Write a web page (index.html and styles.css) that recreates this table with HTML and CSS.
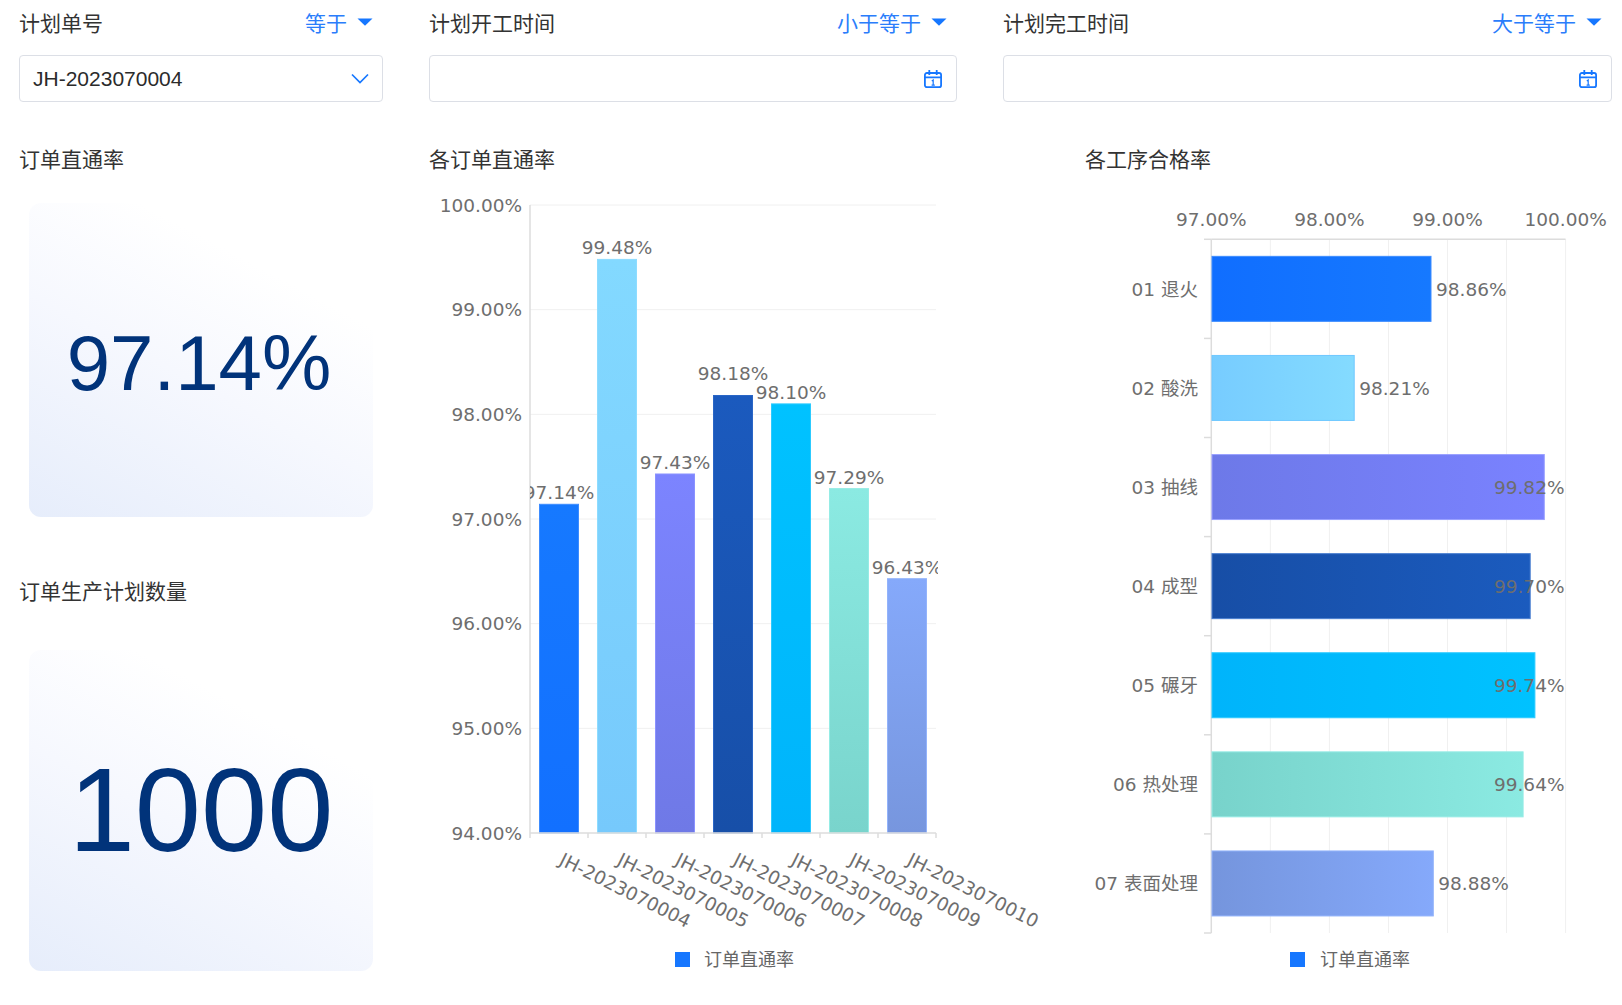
FILE: index.html
```html
<!DOCTYPE html>
<html lang="zh-CN">
<head>
<meta charset="utf-8">
<title>订单直通率</title>
<link rel="stylesheet" href="styles.css">
</head>
<body>
<div class="page">
  <div class="filters">
    <div class="filter">
      <div class="filter-head">
        <span class="filter-label">计划单号</span>
        <span class="filter-op">等于<svg class="caret" width="16" height="8" viewBox="0 0 16 8"><path d="M0.5 0.5h15L8 7.8z" fill="#1677ff"/></svg></span>
      </div>
      <div class="filter-box">
        <span class="filter-value">JH-2023070004</span>
        <svg class="chevron" width="18" height="11" viewBox="0 0 18 11"><path d="M1 1.5l8 8 8-8" fill="none" stroke="#1677ff" stroke-width="1.7"/></svg>
      </div>
    </div>
    <div class="filter">
      <div class="filter-head">
        <span class="filter-label">计划开工时间</span>
        <span class="filter-op">小于等于<svg class="caret" width="16" height="8" viewBox="0 0 16 8"><path d="M0.5 0.5h15L8 7.8z" fill="#1677ff"/></svg></span>
      </div>
      <div class="filter-box">
        <span class="filter-value"></span>
        <svg class="cal" width="20" height="20" viewBox="0 0 20 20" fill="none" stroke="#1677ff"><rect x="1.9" y="4" width="16.2" height="14.2" rx="2" stroke-width="1.8"/><path d="M1.9 8.4h16.2M6.3 1v5M13.7 1v5" stroke-width="1.8"/><path d="M8.8 11.9l1.4-1v5.3M8.6 16.2h3.2" stroke-width="1.2"/></svg>
      </div>
    </div>
    <div class="filter">
      <div class="filter-head">
        <span class="filter-label">计划完工时间</span>
        <span class="filter-op">大于等于<svg class="caret" width="16" height="8" viewBox="0 0 16 8"><path d="M0.5 0.5h15L8 7.8z" fill="#1677ff"/></svg></span>
      </div>
      <div class="filter-box">
        <span class="filter-value"></span>
        <svg class="cal" width="20" height="20" viewBox="0 0 20 20" fill="none" stroke="#1677ff"><rect x="1.9" y="4" width="16.2" height="14.2" rx="2" stroke-width="1.8"/><path d="M1.9 8.4h16.2M6.3 1v5M13.7 1v5" stroke-width="1.8"/><path d="M8.8 11.9l1.4-1v5.3M8.6 16.2h3.2" stroke-width="1.2"/></svg>
      </div>
    </div>
  </div>

  <div class="content">
    <div class="kpis">
      <div class="title">订单直通率</div>
      <div class="card card-rate"><span class="kpi kpi-rate">97.14%</span></div>
      <div class="title title-second">订单生产计划数量</div>
      <div class="card card-qty"><span class="kpi kpi-qty">1000</span></div>
    </div>

    <div class="chart-col">
      <div class="title">各订单直通率</div>
      <svg class="chart" width="610" height="830" viewBox="0 0 610 830">
        <defs>
          <clipPath id="plotclip"><rect x="101" y="0" width="408" height="660"/></clipPath>
          <linearGradient id="v1" x1="0" y1="0" x2="0" y2="1"><stop offset="0" stop-color="#1679ff"/><stop offset="1" stop-color="#1270ff"/></linearGradient>
          <linearGradient id="v2" x1="0" y1="0" x2="0" y2="1"><stop offset="0" stop-color="#83d9ff"/><stop offset="1" stop-color="#76c9fc"/></linearGradient>
          <linearGradient id="v3" x1="0" y1="0" x2="0" y2="1"><stop offset="0" stop-color="#7c84ff"/><stop offset="1" stop-color="#6f79e6"/></linearGradient>
          <linearGradient id="v4" x1="0" y1="0" x2="0" y2="1"><stop offset="0" stop-color="#1b5abe"/><stop offset="1" stop-color="#174fa8"/></linearGradient>
          <linearGradient id="v5" x1="0" y1="0" x2="0" y2="1"><stop offset="0" stop-color="#00c2ff"/><stop offset="1" stop-color="#00b4fb"/></linearGradient>
          <linearGradient id="v6" x1="0" y1="0" x2="0" y2="1"><stop offset="0" stop-color="#8beae2"/><stop offset="1" stop-color="#79d4cc"/></linearGradient>
          <linearGradient id="v7" x1="0" y1="0" x2="0" y2="1"><stop offset="0" stop-color="#85a9fb"/><stop offset="1" stop-color="#7796de"/></linearGradient>
        </defs>
        <g class="grid">
          <line x1="101" y1="30" x2="507" y2="30"/>
          <line x1="101" y1="134.67" x2="507" y2="134.67"/>
          <line x1="101" y1="239.33" x2="507" y2="239.33"/>
          <line x1="101" y1="344" x2="507" y2="344"/>
          <line x1="101" y1="448.67" x2="507" y2="448.67"/>
          <line x1="101" y1="553.33" x2="507" y2="553.33"/>
        </g>
        <g class="axis-text" text-anchor="end">
          <text x="93" y="30" dy="0.36em">100.00%</text>
          <text x="93" y="134.67" dy="0.36em">99.00%</text>
          <text x="93" y="239.33" dy="0.36em">98.00%</text>
          <text x="93" y="344" dy="0.36em">97.00%</text>
          <text x="93" y="448.67" dy="0.36em">96.00%</text>
          <text x="93" y="553.33" dy="0.36em">95.00%</text>
          <text x="93" y="658" dy="0.36em">94.00%</text>
        </g>
        <g class="bars">
          <rect x="110.5" y="329.3" width="39" height="328.7" fill="url(#v1)" stroke="#3d8cff"/>
          <rect x="168.5" y="84.4" width="39" height="573.6" fill="url(#v2)" stroke="#8ddcff"/>
          <rect x="226.5" y="299" width="39" height="359" fill="url(#v3)" stroke="#8a92ff"/>
          <rect x="284.5" y="220.5" width="39" height="437.5" fill="url(#v4)" stroke="#2a66c6"/>
          <rect x="342.5" y="228.9" width="39" height="429.1" fill="url(#v5)" stroke="#2ccaff"/>
          <rect x="400.5" y="313.6" width="39" height="344.4" fill="url(#v6)" stroke="#95ece5"/>
          <rect x="458.5" y="403.7" width="39" height="254.3" fill="url(#v7)" stroke="#93b3fb"/>
        </g>
        <g class="axis-line">
          <line x1="101" y1="30" x2="101" y2="658"/>
          <line x1="101" y1="658" x2="507" y2="658"/>
          <line x1="101" y1="658" x2="101" y2="663"/>
          <line x1="159" y1="658" x2="159" y2="663"/>
          <line x1="217" y1="658" x2="217" y2="663"/>
          <line x1="275" y1="658" x2="275" y2="663"/>
          <line x1="333" y1="658" x2="333" y2="663"/>
          <line x1="391" y1="658" x2="391" y2="663"/>
          <line x1="449" y1="658" x2="449" y2="663"/>
          <line x1="507" y1="658" x2="507" y2="663"/>
        </g>
        <g class="axis-text" text-anchor="middle" clip-path="url(#plotclip)">
          <text x="130" y="324">97.14%</text>
          <text x="188" y="79.4">99.48%</text>
          <text x="246" y="294">97.43%</text>
          <text x="304" y="205">98.18%</text>
          <text x="362" y="223.9">98.10%</text>
          <text x="420" y="308.6">97.29%</text>
          <text x="478" y="398.7">96.43%</text>
        </g>
        <g class="axis-text">
          <text x="129" y="689" transform="rotate(26.5 129 689)">JH-2023070004</text>
          <text x="187" y="689" transform="rotate(26.5 187 689)">JH-2023070005</text>
          <text x="245" y="689" transform="rotate(26.5 245 689)">JH-2023070006</text>
          <text x="303" y="689" transform="rotate(26.5 303 689)">JH-2023070007</text>
          <text x="361" y="689" transform="rotate(26.5 361 689)">JH-2023070008</text>
          <text x="419" y="689" transform="rotate(26.5 419 689)">JH-2023070009</text>
          <text x="477" y="689" transform="rotate(26.5 477 689)">JH-2023070010</text>
        </g>
        <rect x="246" y="777" width="15" height="15" fill="#1677ff"/>
        <text class="legend-text" x="275" y="784.5" dy="0.36em">订单直通率</text>
      </svg>
    </div>

    <div class="chart-col">
      <div class="title">各工序合格率</div>
      <svg class="chart" width="528" height="830" viewBox="0 0 528 830">
        <defs>
          <linearGradient id="h1" x1="0" y1="0" x2="1" y2="0"><stop offset="0" stop-color="#106eff"/><stop offset="1" stop-color="#1679ff"/></linearGradient>
          <linearGradient id="h2" x1="0" y1="0" x2="1" y2="0"><stop offset="0" stop-color="#77ccff"/><stop offset="1" stop-color="#84dbff"/></linearGradient>
          <linearGradient id="h3" x1="0" y1="0" x2="1" y2="0"><stop offset="0" stop-color="#6d79e8"/><stop offset="1" stop-color="#7a82ff"/></linearGradient>
          <linearGradient id="h4" x1="0" y1="0" x2="1" y2="0"><stop offset="0" stop-color="#174ea6"/><stop offset="1" stop-color="#1b5bbe"/></linearGradient>
          <linearGradient id="h5" x1="0" y1="0" x2="1" y2="0"><stop offset="0" stop-color="#00b4fb"/><stop offset="1" stop-color="#00c2ff"/></linearGradient>
          <linearGradient id="h6" x1="0" y1="0" x2="1" y2="0"><stop offset="0" stop-color="#78d3cb"/><stop offset="1" stop-color="#8beae2"/></linearGradient>
          <linearGradient id="h7" x1="0" y1="0" x2="1" y2="0"><stop offset="0" stop-color="#7595dd"/><stop offset="1" stop-color="#85a9fb"/></linearGradient>
        </defs>
        <g class="grid">
          <line x1="185.35" y1="64.3" x2="185.35" y2="758"/>
          <line x1="244.4" y1="64.3" x2="244.4" y2="758"/>
          <line x1="303.45" y1="64.3" x2="303.45" y2="758"/>
          <line x1="362.5" y1="64.3" x2="362.5" y2="758"/>
          <line x1="421.55" y1="64.3" x2="421.55" y2="758"/>
          <line x1="480.6" y1="64.3" x2="480.6" y2="758"/>
        </g>
        <g class="axis-text" text-anchor="middle">
          <text x="126.3" y="44.5" dy="0.36em">97.00%</text>
          <text x="244.4" y="44.5" dy="0.36em">98.00%</text>
          <text x="362.5" y="44.5" dy="0.36em">99.00%</text>
          <text x="480.6" y="44.5" dy="0.36em">100.00%</text>
        </g>
        <g class="axis-line">
          <line x1="126.3" y1="64.3" x2="480.6" y2="64.3"/>
          <line x1="126.3" y1="64.3" x2="126.3" y2="758"/>
          <line x1="119" y1="64.3" x2="126.3" y2="64.3"/>
          <line x1="119" y1="163.4" x2="126.3" y2="163.4"/>
          <line x1="119" y1="262.5" x2="126.3" y2="262.5"/>
          <line x1="119" y1="361.6" x2="126.3" y2="361.6"/>
          <line x1="119" y1="460.7" x2="126.3" y2="460.7"/>
          <line x1="119" y1="559.8" x2="126.3" y2="559.8"/>
          <line x1="119" y1="658.9" x2="126.3" y2="658.9"/>
          <line x1="119" y1="758" x2="126.3" y2="758"/>
        </g>
        <g class="bars">
          <rect x="127" y="81.35" width="219" height="65" fill="url(#h1)" stroke="#3d8cff"/>
          <rect x="127" y="180.45" width="142.2" height="65" fill="url(#h2)" stroke="#6fc8ff"/>
          <rect x="127" y="279.55" width="332.3" height="65" fill="url(#h3)" stroke="#9aa0ff"/>
          <rect x="127" y="378.65" width="318.2" height="65" fill="url(#h4)" stroke="#4a7fd0"/>
          <rect x="127" y="477.75" width="322.9" height="65" fill="url(#h5)" stroke="#2ccaff"/>
          <rect x="127" y="576.85" width="311.1" height="65" fill="url(#h6)" stroke="#95ece5"/>
          <rect x="127" y="675.95" width="221.3" height="65" fill="url(#h7)" stroke="#93b3fb"/>
        </g>
        <g class="axis-text" text-anchor="end">
          <text x="113" y="113.85" dy="0.36em">01 退火</text>
          <text x="113" y="212.95" dy="0.36em">02 酸洗</text>
          <text x="113" y="312.05" dy="0.36em">03 抽线</text>
          <text x="113" y="411.15" dy="0.36em">04 成型</text>
          <text x="113" y="510.25" dy="0.36em">05 碾牙</text>
          <text x="113" y="609.35" dy="0.36em">06 热处理</text>
          <text x="113" y="708.45" dy="0.36em">07 表面处理</text>
        </g>
        <g class="axis-text">
          <text x="351" y="113.85" dy="0.36em">98.86%</text>
          <text x="274.2" y="212.95" dy="0.36em">98.21%</text>
          <text x="479.5" y="312.05" dy="0.36em" text-anchor="end">99.82%</text>
          <text x="479.5" y="411.15" dy="0.36em" text-anchor="end">99.70%</text>
          <text x="479.5" y="510.25" dy="0.36em" text-anchor="end">99.74%</text>
          <text x="479.5" y="609.35" dy="0.36em" text-anchor="end">99.64%</text>
          <text x="353.3" y="708.45" dy="0.36em">98.88%</text>
        </g>
        <rect x="205" y="777" width="15" height="15" fill="#1677ff"/>
        <text class="legend-text" x="235" y="784.5" dy="0.36em">订单直通率</text>
      </svg>
    </div>
  </div>
</div>
</body>
</html>
```

FILE: styles.css
```css
html, body {
  margin: 0;
  padding: 0;
  background: #ffffff;
}
body {
  width: 1622px;
  height: 1005px;
  overflow: hidden;
  font-family: "Liberation Sans", "Noto Sans CJK SC", sans-serif;
  color: #333333;
}
.page {
  padding: 7px 9px 0 19px;
}
.filters {
  display: grid;
  grid-template-columns: 364px 528px 609px;
  column-gap: 46px;
}
.filter-head {
  display: flex;
  justify-content: space-between;
  align-items: center;
  height: 30px;
  padding-right: 10px;
}
.filter-label {
  font-size: 21px;
  color: #333333;
}
.filter-op {
  display: flex;
  align-items: center;
  gap: 10px;
  font-size: 21px;
  color: #2a7dfb;
}
.caret {
  display: block;
}
.filter-box {
  margin-top: 18px;
  height: 47px;
  box-sizing: border-box;
  border: 1px solid #dcdfe6;
  border-radius: 4px;
  display: flex;
  align-items: center;
  justify-content: space-between;
  padding: 0 13px 0 13px;
}
.filter-value {
  font-size: 21px;
  color: #2b2b2b;
}
.chevron, .cal {
  display: block;
}
.content {
  display: grid;
  grid-template-columns: 364px 610px 528px;
  column-gap: 46px;
  margin-top: 43px;
}
.title {
  height: 30px;
  line-height: 30px;
  font-size: 21px;
  color: #333333;
}
.kpis {
  display: flex;
  flex-direction: column;
}
.card {
  margin-left: 10px;
  width: 344px;
  border-radius: 12px;
  background: linear-gradient(28deg, #e6edfb 0%, #f6f8fe 45%, #ffffff 75%);
  display: flex;
  align-items: center;
  justify-content: center;
}
.card-rate {
  margin-top: 28px;
  height: 314px;
  box-sizing: border-box;
  padding-top: 8px;
}
.title-second {
  margin-top: 60px;
}
.card-qty {
  margin-top: 43px;
  height: 321px;
}
.kpi {
  color: #01337a;
  font-family: "Liberation Sans", Arial, sans-serif;
  line-height: 1.15;
}
.kpi-rate {
  font-size: 78px;
  margin-right: 4px;
}
.kpi-qty {
  font-size: 119px;
  margin-right: 0;
}
.chart {
  display: block;
  overflow: visible;
}
.grid line {
  stroke: #f0f0f0;
  stroke-width: 1;
}
.axis-line line {
  stroke: #dcdcdc;
  stroke-width: 1.5;
}
.axis-text text {
  font-family: "DejaVu Sans", "Noto Sans CJK SC", sans-serif;
  font-size: 18.5px;
  fill: #6e6e6e;
}
.legend-text {
  font-family: "DejaVu Sans", "Noto Sans CJK SC", sans-serif;
  font-size: 18px;
  fill: #666666;
}
.bars rect {
  stroke-width: 1;
}
```
